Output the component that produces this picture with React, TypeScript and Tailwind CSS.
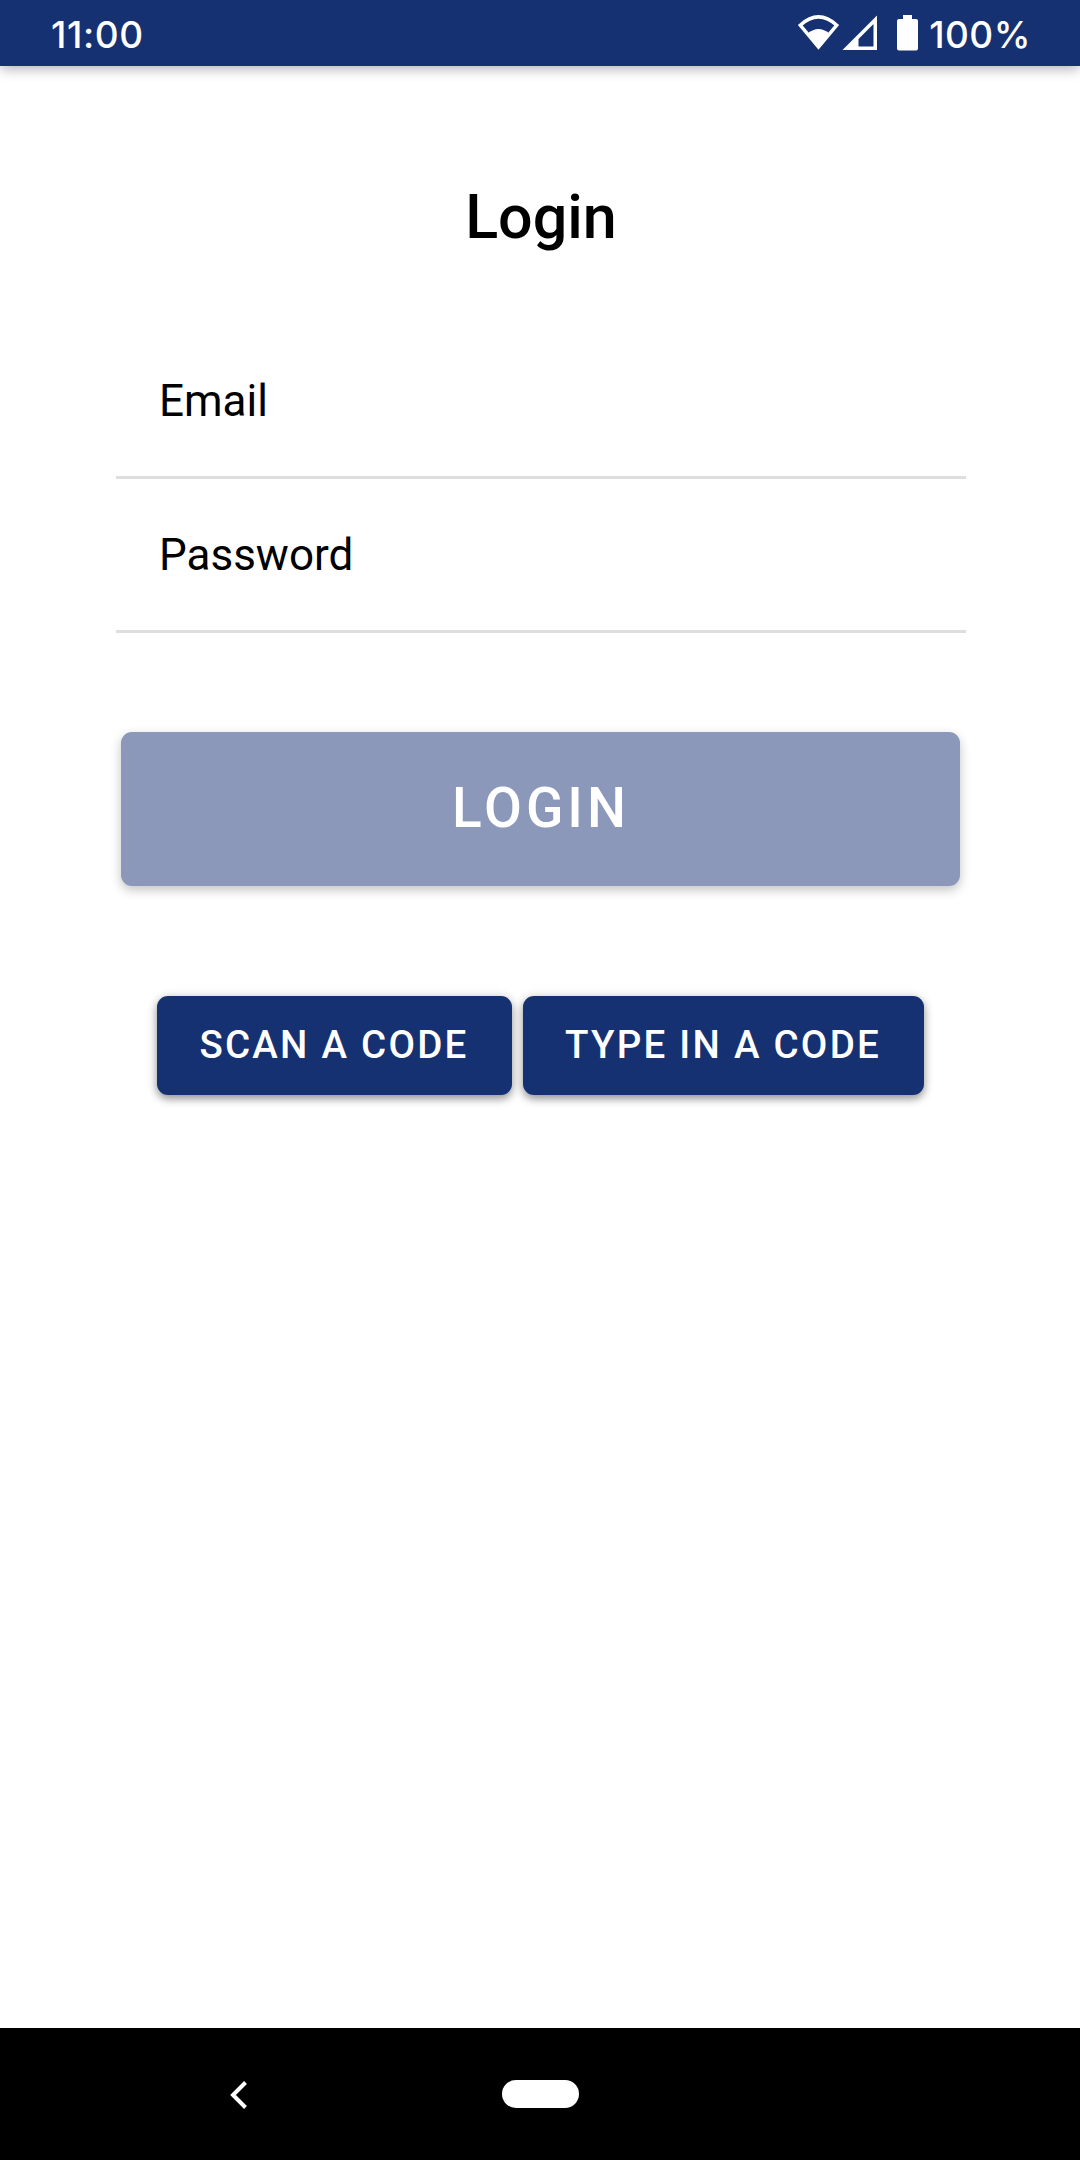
function StatusIcons() {
  return (
    <svg width="124" height="40" viewBox="796 13 124 40" fill="none" aria-hidden="true">
      <path d="M800.200 25.200Q818.500 8.500 836.800 25.200L818.500 47.200Z" stroke="white" strokeWidth="3.4" />
      <path d="M807.500 33.500Q818.500 24.500 829.500 33.500L818.500 48Z" fill="white" />
      <path fillRule="evenodd" d="M842.500 50L877 15.500V50ZM858.500 46.500H873.500V24L858.500 39Z" fill="white" />
      <path d="M903 15H912V19H916Q918 19 918 21V48.500Q918 50.500 916 50.500H899Q897 50.500 897 48.500V21Q897 19 899 19H903Z" fill="white" />
    </svg>
  );
}

export default function App() {
  return (
    <div className="flex h-[2160px] w-[1080px] flex-col overflow-hidden bg-white font-['Roboto',sans-serif] text-black">
      <header className="flex h-[66px] shrink-0 items-center justify-between bg-[#163172] pr-[49px] pl-[51px] font-['Inter',sans-serif] text-[37px] leading-none font-medium text-white shadow-[0_3px_12px_rgba(0,0,0,0.3)]">
        <span className="mt-[3px] tracking-[0.6px]">11:00</span>
        <div className="flex items-center gap-[9px]">
          <StatusIcons />
          <span className="mt-[3px] tracking-[0.5px]">100%</span>
        </div>
      </header>
      <main className="flex flex-1 flex-col items-center">
        <h1 className="mt-[115px] ml-[2px] text-[61px] leading-[72px] font-medium">Login</h1>
        <form className="mt-[70px] ml-[2px] flex w-[850px] flex-col">
          <label className="h-[156px] border-b-[3px] border-[#dedede] pt-[50px] pl-[43px] text-[44px] leading-[56px]">Email</label>
          <label className="h-[154px] border-b-[3px] border-[#dedede] pt-[48px] pl-[43px] text-[44px] leading-[56px]">Password</label>
        </form>
        <button className="mt-[99px] h-[154px] w-[839px] rounded-[11px] bg-[#8b98b9] pb-[2px] pl-[2px] text-[55px] font-medium tracking-[4px] text-white shadow-[0_4px_11px_rgba(0,0,0,0.24)]">LOGIN</button>
        <div className="mt-[110px] flex gap-[11px]">
          <button className="h-[99px] w-[355px] rounded-[11px] bg-[#163172] pb-[2px] text-[38.5px] font-medium tracking-[2.25px] text-white shadow-[0_4px_8px_rgba(0,0,0,0.38),0_0_12px_rgba(0,0,0,0.1)]">SCAN A CODE</button>
          <button className="h-[99px] w-[401px] rounded-[11px] bg-[#163172] pb-[2px] text-[38.5px] font-medium tracking-[2.25px] text-white shadow-[0_4px_8px_rgba(0,0,0,0.38),0_0_12px_rgba(0,0,0,0.1)]">TYPE IN A CODE</button>
        </div>
      </main>
      <nav className="grid h-[132px] shrink-0 grid-cols-[1fr_77px_1fr] items-center bg-black">
        <button aria-label="Back" className="mt-[1px] ml-[228px] w-5">
          <svg width="20" height="28" viewBox="0 0 20 28" fill="none" stroke="white" strokeWidth="4" aria-hidden="true">
            <path d="M17.500 1.500L5 14L17.500 26.500" />
          </svg>
        </button>
        <button aria-label="Home" className="h-7 rounded-full bg-white" />
      </nav>
    </div>
  );
}
